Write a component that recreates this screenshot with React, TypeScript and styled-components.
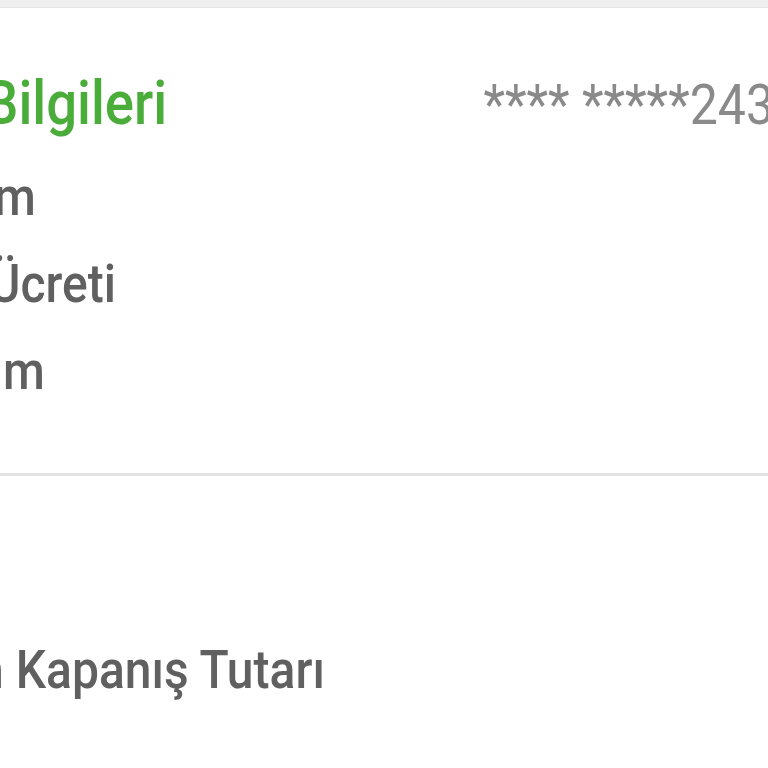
import React from 'react';
import styled, { createGlobalStyle, css } from 'styled-components';

const GlobalStyle = createGlobalStyle`
  html, body {
    margin: 0;
    padding: 0;
    background: #ffffff;
    overflow: hidden;
  }
  body {
    font-family: Roboto, "Noto Sans", "Liberation Sans", sans-serif;
  }
`;

// the screenshot is a little taller than wide, so glyphs get stretched upward
const tall = (baseline: number) => css`
  display: inline-block;
  transform: scaleY(1.12);
  transform-origin: 0 ${baseline}px;
`;

const Page = styled.div`
  width: 768px;
  height: 768px;
  overflow: hidden;
  background: #ffffff;
`;

const TopStrip = styled.div`
  height: 7px;
  background: #efefef;
  border-bottom: 1px solid #e6e6e6;
`;

const Card = styled.section`
  padding: 67px 0 57px;
  border-bottom: 3px solid #e3e3e3;
`;

const HeaderRow = styled.div`
  display: flex;
  justify-content: space-between;
  align-items: baseline;
  margin-bottom: 18px;
`;

const Title = styled.h2<{ $clip: number }>`
  margin: 0 0 0 ${(p) => -p.$clip}px;
  font-size: 54.5px;
  line-height: 60px;
  font-weight: 500;
  color: #4aad3a;
  white-space: nowrap;
  ${tall(48)}
`;

const CardNumber = styled.span`
  margin-right: -6px;
  font-size: 50px;
  line-height: 60px;
  color: #8a8a8a;
  white-space: nowrap;
  ${tall(48)}
`;

const Row = styled.div`
  display: flex;
  justify-content: space-between;
  height: 87px;
`;

const Label = styled.span<{ $clip: number }>`
  margin-left: ${(p) => -p.$clip}px;
  font-size: 48px;
  line-height: 87px;
  font-weight: 500;
  color: #606060;
  white-space: nowrap;
  ${tall(59)}
`;

const Summary = styled.section`
  padding-top: 152px;
`;

const rows = [
  { label: 'm', clip: 6 },
  { label: 'Ücreti', clip: 11 },
  { label: 'm', clip: -3 },
];

const App: React.FC = () => {
  return (
    <Page>
      <GlobalStyle />
      <TopStrip />
      <Card>
        <HeaderRow>
          <Title $clip={16}>Bilgileri</Title>
          <CardNumber>**** *****243</CardNumber>
        </HeaderRow>
        {rows.map((row, index) => (
          <Row key={index}>
            <Label $clip={row.clip}>{row.label}</Label>
          </Row>
        ))}
      </Card>
      <Summary>
        <Row>
          <Label $clip={38}>m Kapanış Tutarı</Label>
        </Row>
      </Summary>
    </Page>
  );
};

export default App;
